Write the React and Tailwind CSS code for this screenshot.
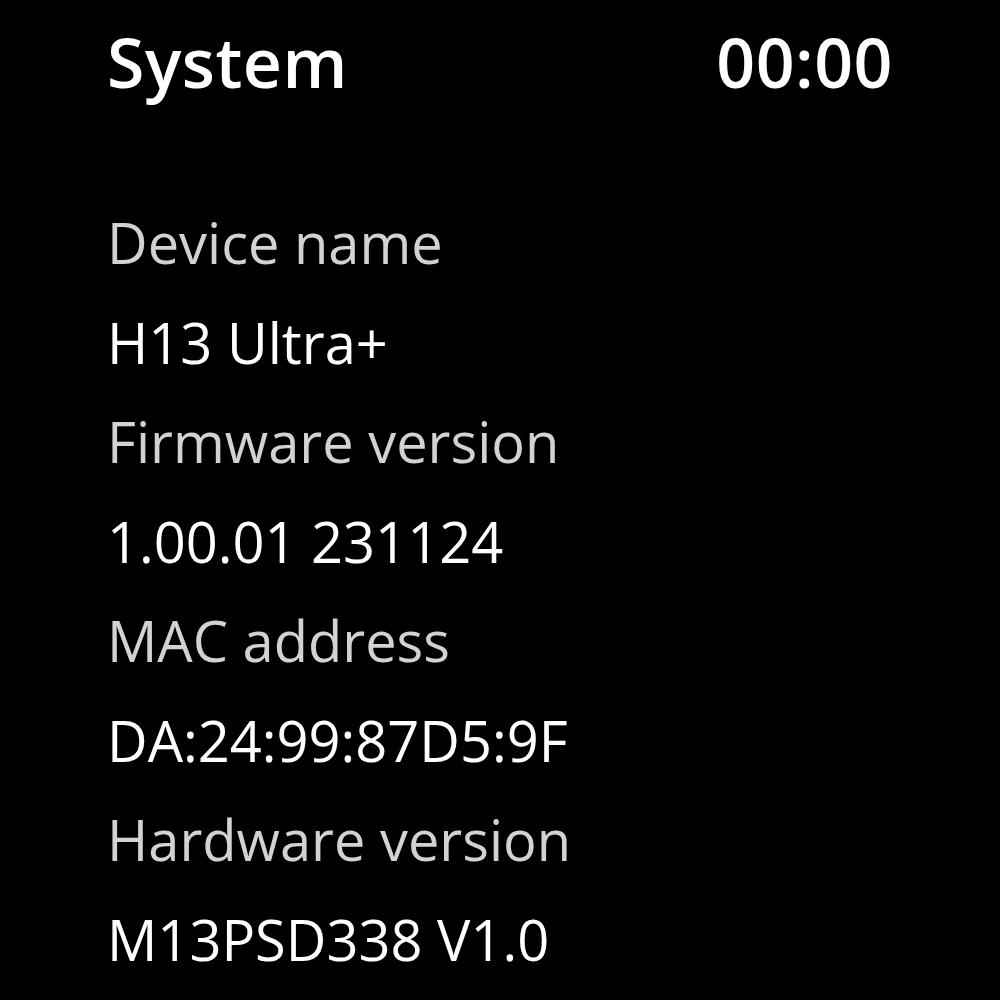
import React from 'react';

const rows = [
  { label: 'Device name', value: 'H13 Ultra+' },
  { label: 'Firmware version', value: '1.00.01 231124' },
  { label: 'MAC address', value: 'DA:24:99:87D5:9F' },
  { label: 'Hardware version', value: 'M13PSD338 V1.0' },
];

export default function App() {
  return (
    <div className="w-[1000px] h-[1000px] bg-black overflow-hidden pl-[107px] pr-[107px] font-['Open_Sans',sans-serif]">
      {/* header */}
      <div className="flex items-start justify-between pt-[18px] h-[193px]">
        <h1 className="text-[68px] font-semibold text-white leading-[88px] tracking-[0.5px]">System</h1>
        <span className="text-[68px] font-semibold text-white leading-[88px] tracking-[0.5px]">00:00</span>
      </div>

      {/* info list */}
      <div className="flex flex-col">
        {rows.map((row) => (
          <React.Fragment key={row.label}>
            <div className="h-[99.5px] leading-[99.5px] text-[56px] text-[#d2d2d2] whitespace-nowrap">{row.label}</div>
            <div className="h-[99.5px] leading-[99.5px] text-[56px] text-white whitespace-nowrap">{row.value}</div>
          </React.Fragment>
        ))}
      </div>
    </div>
  );
}
